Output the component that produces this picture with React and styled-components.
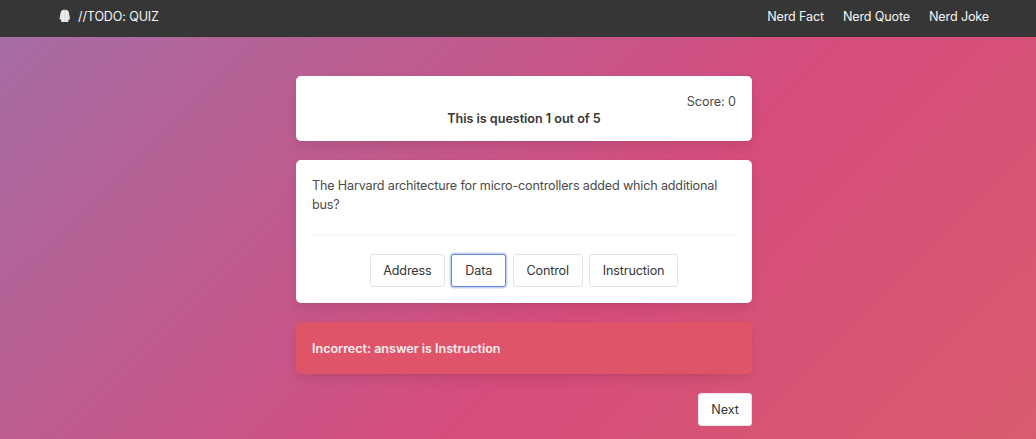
import React from "react";
import styled, { createGlobalStyle } from "styled-components";

const GlobalStyle = createGlobalStyle`
  *, *::before, *::after { box-sizing: border-box; }
  body {
    margin: 0;
    color: #4a4a4a;
    font-family: Inter, "Liberation Sans", sans-serif;
    font-size: 12.6px;
    letter-spacing: -0.165px;
    line-height: 19.5px;
  }
`;

const Page = styled.div`
  min-height: 439px;
  background: linear-gradient(135deg, #a36ea5 0%, #d64c7c 60.5%, #d95c6e 100%);
`;

const Navbar = styled.nav`
  display: flex;
  justify-content: space-between;
  height: 37px;
  padding: 7px 47px 0 58px;
  background: #363636;
  color: #f5f5f5;
`;

const Brand = styled.a`
  display: flex;
  align-items: flex-start;
  gap: 6px;
  letter-spacing: -0.15px;
`;

const NavLinks = styled.div`
  display: flex;
  gap: 19px;
`;

const NavLink = styled.a`
  color: inherit;
  letter-spacing: -0.15px;
`;

const Column = styled.main`
  display: flex;
  flex-direction: column;
  gap: 19px;
  width: 456px;
  margin-left: 296px;
  padding-top: 39px;
`;

const Box = styled.section`
  padding: 16px;
  border-radius: 5px;
  background: #fff;
  box-shadow: 0 6px 13px -2px rgba(10, 10, 10, 0.1), 0 0 0 1px rgba(10, 10, 10, 0.02);
`;

const StatusBox = styled(Box)`
  height: 65px;
`;

const Score = styled.p`
  margin: 0;
  letter-spacing: -0.08px;
  line-height: 19px;
  text-align: right;
`;

const Progress = styled.p`
  margin: 0;
  color: #363636;
  font-weight: 600;
  letter-spacing: -0.03px;
  line-height: 15px;
  text-align: center;
`;

const QuestionBox = styled(Box)`
  height: 143px;
`;

const Question = styled.p`
  margin: 0;
  height: 58px;
  line-height: 19px;
`;

const Divider = styled.hr`
  height: 2px;
  margin: 0 0 18px;
  border: 0;
  background: #f7f7f7;
`;

const Answers = styled.div`
  display: flex;
  justify-content: center;
  gap: 6.4px;
`;

const Button = styled.button`
  width: ${(p) => p.$width}px;
  height: 33px;
  padding: 0;
  border: 1px solid ${(p) => (p.$focused ? "#6686dc" : "#e3e3e3")};
  border-radius: 3px;
  background: #fff;
  box-shadow: ${(p) => (p.$focused ? "0 0 0 1.5px rgba(72, 112, 220, 0.3)" : "none")};
  color: #363636;
  font: inherit;
  letter-spacing: -0.13px;
`;

const Notice = styled(Box)`
  height: 52px;
  padding-top: 17px;
  background: #df5469;
  color: #fbeef0;
  font-weight: 600;
  letter-spacing: -0.03px;
`;

const Actions = styled.div`
  display: flex;
  justify-content: flex-end;
`;

const CoatIcon = styled.svg`
  flex: none;
  width: 14px;
  height: 14px;
  margin-top: 1.5px;
`;

const Coat = () => (
  <CoatIcon viewBox="0 0 14 14" aria-hidden="true">
    <path d="M5.4.8h2.800l1.900 1c.8.9 1.500 5 1.900 8.500l-1.500.5-.2-.8.100 2.900H3.200l.1-2.900-.2.8-1.500-.5C2 6.800 2.700 2.700 3.500 1.800z" fill="#ececec" />
    <path d="M6.800 2.600v10.200M3.800 5.400l-.3 4.500M9.800 5.400l.3 4.500" fill="none" stroke="#c4c4c4" strokeWidth=".5" />
    <path d="M5.800.9 6.800 2.300 7.800.9" fill="#bbb" />
  </CoatIcon>
);

const answers = [
  { label: "Address", width: 75 },
  { label: "Data", width: 55, focused: true },
  { label: "Control", width: 70 },
  { label: "Instruction", width: 89 },
];

export default function App() {
  return (
    <Page>
      <GlobalStyle />
      <Navbar>
        <Brand>
          <Coat />
          <span>//TODO: QUIZ</span>
        </Brand>
        <NavLinks>
          <NavLink>Nerd Fact</NavLink>
          <NavLink>Nerd Quote</NavLink>
          <NavLink>Nerd Joke</NavLink>
        </NavLinks>
      </Navbar>
      <Column>
        <StatusBox>
          <Score>Score: 0</Score>
          <Progress>This is question 1 out of 5</Progress>
        </StatusBox>
        <QuestionBox>
          <Question>
            The Harvard architecture for micro-controllers added which additional bus?
          </Question>
          <Divider />
          <Answers>
            {answers.map((a) => (
              <Button key={a.label} $width={a.width} $focused={a.focused}>{a.label}</Button>
            ))}
          </Answers>
        </QuestionBox>
        <Notice>Incorrect: answer is Instruction</Notice>
        <Actions>
          <Button $width={54}>Next</Button>
        </Actions>
      </Column>
    </Page>
  );
}
